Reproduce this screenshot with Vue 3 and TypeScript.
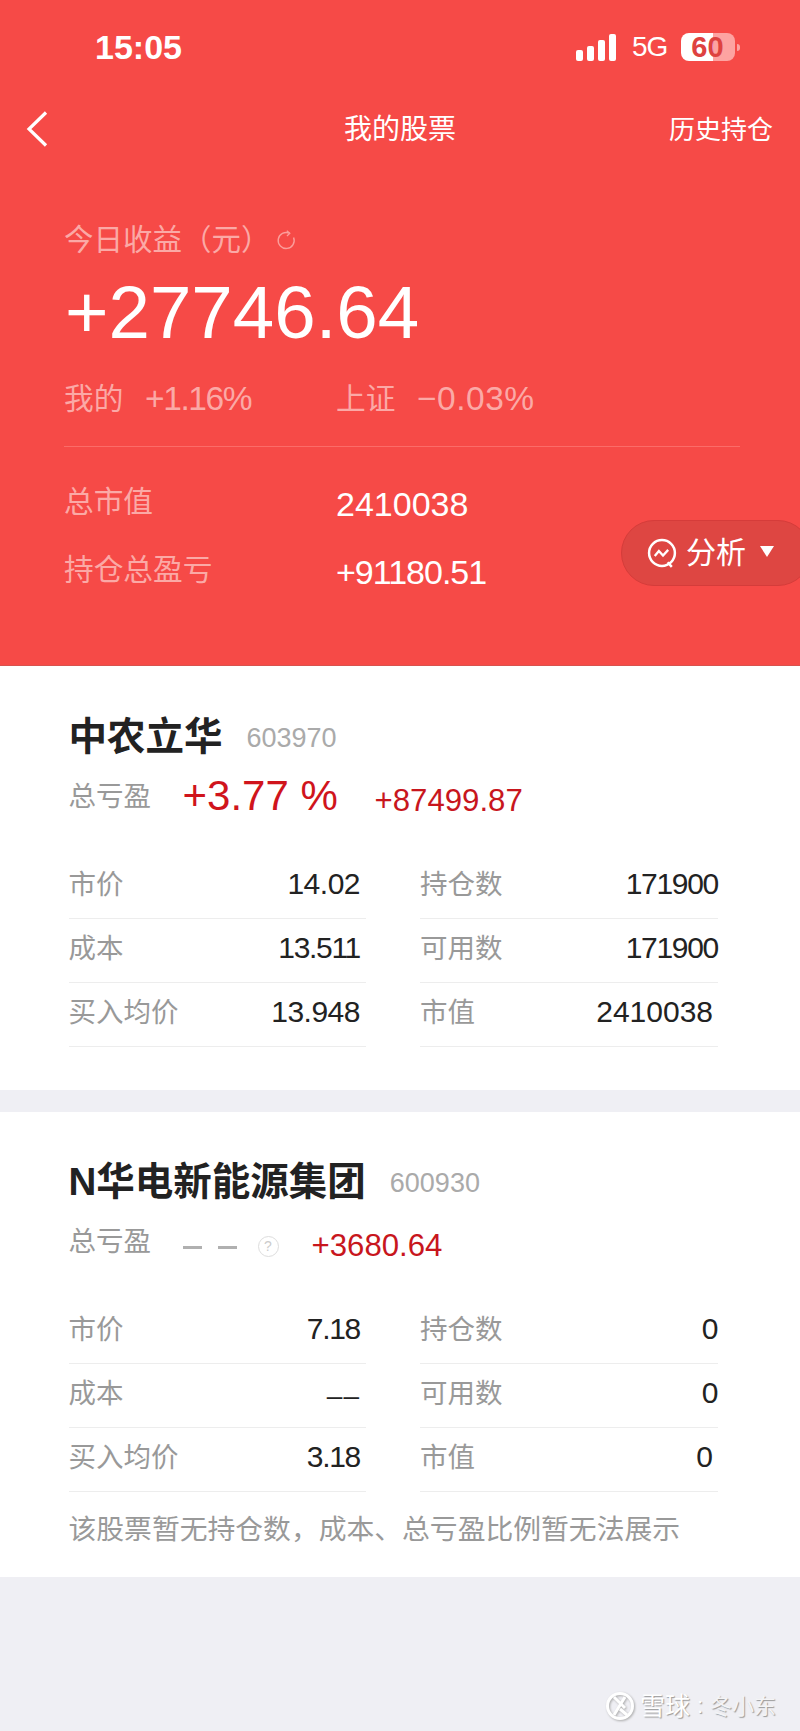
<script setup lang="ts">
interface Row { label: string; value: string; tone?: string }
interface Stock {
  name: string; code: string; pct?: string; profit: string;
  rows: Row[][]; note?: string
}
const stocks: Stock[] = [
  {
    name: '中农立华', code: '603970', pct: '+3.77 %', profit: '+87499.87',
    rows: [
      [{ label: '市价', value: '14.02' }, { label: '持仓数', value: '171900', tone: 'narrow' }],
      [{ label: '成本', value: '13.511', tone: 'narrow' }, { label: '可用数', value: '171900', tone: 'narrow' }],
      [{ label: '买入均价', value: '13.948' }, { label: '市值', value: '2410038', tone: 'inset' }]
    ]
  },
  {
    name: 'N华电新能源集团', code: '600930', profit: '+3680.64',
    rows: [
      [{ label: '市价', value: '7.18', tone: 'narrow' }, { label: '持仓数', value: '0' }],
      [{ label: '成本', value: '––', tone: 'dash' }, { label: '可用数', value: '0' }],
      [{ label: '买入均价', value: '3.18', tone: 'narrow' }, { label: '市值', value: '0', tone: 'inset' }]
    ],
    note: '该股票暂无持仓数，成本、总亏盈比例暂无法展示'
  }
]
</script>

<template>
  <div class="page">
    <header class="hero">
      <div class="status">
        <span class="time">15:05</span>
        <div class="status-right">
          <div class="signal"><i class="b1"></i><i class="b2"></i><i class="b3"></i><i class="b4"></i></div>
          <span class="net">5G</span>
          <div class="battery"><span>60</span></div>
          <i class="nub"></i>
        </div>
      </div>
      <nav class="nav">
        <svg class="back" width="22" height="36" viewBox="0 0 22 36"><path d="M20 1.5 3 18l17 16.5" fill="none" stroke="#fff" stroke-width="3.2"/></svg>
        <span class="title">我的股票</span>
        <span class="history">历史持仓</span>
      </nav>
      <div class="today">
        <span>今日收益（元）</span>
        <svg width="20" height="20" viewBox="0 0 20 20"><path d="M13.5 3.2A8 8 0 1 0 17.6 7.5" fill="none" stroke="#fb9d9a" stroke-width="1.4"/><path d="M10.8 .8 13.8 3.2 11 6" fill="none" stroke="#fb9d9a" stroke-width="1.3"/></svg>
      </div>
      <div class="big">+27746.64</div>
      <div class="compare">
        <div class="cmp-col"><span class="cmp-l">我的</span><span class="tight">+1.16%</span></div>
        <div class="cmp-col"><span class="cmp-l">上证</span><span class="wide">−0.03%</span></div>
      </div>
      <div class="divider"></div>
      <div class="sum-row"><span class="sum-l">总市值</span><span class="sum-v">2410038</span></div>
      <div class="sum-row second"><span class="sum-l">持仓总盈亏</span><span class="sum-v narrow">+91180.51</span></div>
      <div class="pill">
        <svg width="31" height="31" viewBox="0 0 30 30"><circle cx="14.5" cy="14.5" r="12.5" fill="none" stroke="#fff" stroke-width="2.4"/><path d="M20 23.5 24 28" fill="none" stroke="#fff" stroke-width="2.4"/><path d="M7.5 17.5 11.5 12.5 15.5 17 20.5 11.5" fill="none" stroke="#fff" stroke-width="2.2"/></svg>
        <span class="pill-t">分析</span>
        <i class="tri"></i>
      </div>
    </header>

    <section v-for="(s, i) in stocks" :key="s.code" class="card" :class="{ last: i === 1 }">
      <div class="name-row">
        <span class="name">{{ s.name }}</span>
        <span class="code">{{ s.code }}</span>
      </div>
      <div class="gain-row">
        <span class="gain-l">总亏盈</span>
        <template v-if="s.pct">
          <span class="pct">{{ s.pct }}</span>
        </template>
        <template v-else>
          <span class="dashes"><i></i><i></i></span>
          <span class="help">?</span>
        </template>
        <span class="profit">{{ s.profit }}</span>
      </div>
      <div class="table">
        <template v-for="(r, ri) in s.rows" :key="ri">
          <div v-for="c in r" :key="c.label" class="cell">
            <span class="c-l">{{ c.label }}</span>
            <span class="c-v" :class="c.tone">{{ c.value }}</span>
          </div>
        </template>
      </div>
      <p v-if="s.note" class="note">{{ s.note }}</p>
    </section>

    <div class="mark">
      <svg width="30" height="30" viewBox="0 0 30 30"><circle cx="15" cy="15" r="12.5" fill="none" stroke="#fff" stroke-width="3"/><path d="M9 6 20 17M20 6 9 24M15 18l7 6" fill="none" stroke="#fff" stroke-width="3"/></svg>
      <span class="mark-brand">雪球</span><span class="mark-colon">:</span><span class="mark-name">冬小东</span>
    </div>
  </div>
</template>

<style>
html, body { margin: 0; background: #efeff4; }
</style>

<style scoped>
.page {
  position: relative; width: 800px; height: 1731px; overflow: hidden; background: #efeff4;
  font-family: "Liberation Sans", "Noto Sans CJK SC", sans-serif;
}
.hero {
  position: relative; box-sizing: border-box; height: 666px; padding: 0 0 0 64px;
  background: #f64a47; color: #fff; border-bottom: 1px solid #d8524e;
}
.status { display: flex; align-items: center; justify-content: space-between; height: 94px; padding: 0 60px 0 31px; }
.time { font-size: 34px; font-weight: 700; }
.status-right { display: flex; align-items: center; }
.signal { display: flex; align-items: flex-end; gap: 4px; height: 27px; margin-right: 1px; }
.signal i { width: 7px; background: #fff; border-radius: 2px; }
.b1 { height: 11px; } .b2 { height: 15px; } .b3 { height: 21px; } .b4 { height: 27px; }
.net { margin-left: 15px; font-size: 28px; line-height: 30px; width: 36px; letter-spacing: -1px; }
.battery {
  box-sizing: border-box; width: 54px; height: 28px; margin-left: 13px; border-radius: 8px;
  background: linear-gradient(90deg, #fff 59%, #fda3a1 59%);
  display: flex; align-items: center; justify-content: center;
  color: #de4240; font-size: 29px; font-weight: 700; padding-right: 1px;
}
.nub { width: 3px; height: 7px; margin-left: 2px; background: #fda3a1; border-radius: 0 3px 3px 0; }
.nav { display: flex; align-items: center; height: 70px; margin-left: -38px; padding-right: 27px; position: relative; justify-content: flex-end; }
.back { position: absolute; left: 0; top: 17px; }
.title { position: absolute; left: 318px; top: 16px; font-size: 28px; line-height: 40px; white-space: nowrap; }
.history { margin-top: 2px; font-size: 26px; line-height: 40px; }
.today { display: flex; align-items: center; margin-top: 53px; height: 40px; font-size: 29.5px; color: #fba9a6; }
.today svg { margin: 5px 0 0 5px; }
.big { margin: 18px 0 0 1px; height: 76px; font-size: 74.5px; line-height: 76px; }
.compare { display: flex; margin-top: 28px; height: 40px; line-height: 40px; font-size: 33.5px; color: #fba9a6; }
.cmp-col { display: flex; width: 272px; }
.cmp-l { width: 81px; font-size: 29.7px; }
.tight { letter-spacing: -1.4px; }
.wide { letter-spacing: 0.5px; }
.divider { margin: 27px 60px 0 0; height: 1px; background: #fb6c68; }
.sum-row { display: flex; align-items: center; height: 40px; margin-top: 37px; }
.sum-row.second { margin-top: 28px; }
.sum-l { width: 272px; box-sizing: border-box; padding-bottom: 4px; font-size: 29.7px; line-height: 32px; color: #fba9a6; }
.sum-v { font-size: 34px; line-height: 40px; }
.sum-v.narrow { letter-spacing: -1px; }
.pill {
  position: absolute; left: 621px; top: 520px; width: 190px; height: 66px; box-sizing: border-box;
  display: flex; align-items: center; padding-left: 25px;
  background: #de4642; border: 1.5px solid #d53c3a; border-radius: 33px;
}
.pill-t { margin-left: 8px; font-size: 30px; line-height: 40px; }
.tri { width: 0; height: 0; margin: 0 0 3px 14px; border: 7px solid transparent; border-top: 11px solid #fff; border-bottom: 0; }
.card { box-sizing: border-box; height: 424px; margin-bottom: 22px; padding: 0 82px 0 68.5px; background: #fff; }
.card.last { height: 465px; margin-bottom: 0; }
.name-row { display: flex; align-items: center; height: 50px; padding-top: 46px; }
.card.last .name-row { padding-top: 45px; }
.name { font-size: 38.5px; line-height: 50px; font-weight: 700; color: #222; white-space: nowrap; }
.code { margin-left: 24px; font-size: 27px; color: #aaa; padding-top: 2px; }
.gain-row { display: flex; align-items: center; height: 50px; margin-top: 12px; }
.gain-l { width: 114px; padding-bottom: 5px; font-size: 27.5px; line-height: 36px; color: #999; }
.pct { width: 192px; padding-bottom: 6px; font-size: 42px; line-height: 50px; color: #d0141c; }
.profit { font-size: 31.2px; line-height: 44px; color: #c8161d; padding-top: 3px; }
.dashes { display: flex; gap: 16px; width: 75px; padding-top: 6px; }
.dashes i { width: 19px; height: 3px; background: #b0b0b0; }
.help {
  box-sizing: border-box; width: 21px; height: 21px; margin: 4px 33px 0 0; border: 1px solid #ddd; border-radius: 50%;
  color: #ccc; font-size: 14px; line-height: 19px; text-align: center;
}
.table { display: grid; grid-template-columns: 297.5px 298px; column-gap: 54px; margin-top: 31px; }
.cell { display: flex; justify-content: space-between; align-items: center; height: 63px; padding-right: 6px; border-bottom: 1px solid #ededed; }
.cell:nth-child(even) { padding-right: 0; }
.c-l { font-size: 27.5px; line-height: 36px; color: #999; padding-bottom: 4px; }
.c-v { font-size: 30px; line-height: 36px; color: #222; letter-spacing: -0.5px; padding-bottom: 6px; }
.c-v.narrow { letter-spacing: -1.3px; }
.c-v.inset { margin-right: 5px; letter-spacing: 0; }
.c-v.dash { font-size: 28px; letter-spacing: 1px; padding-bottom: 0; }
.note { margin: 18px 0 0; font-size: 27.8px; line-height: 40px; color: #999; white-space: nowrap; }
.mark {
  position: absolute; left: 605px; top: 1689px; display: flex; align-items: center;
  line-height: 30px; color: #fff; text-shadow: 1px 1px 1px #999; white-space: nowrap;
}
.mark svg { filter: drop-shadow(1px 1px 1px #aaa); }
.mark-brand { margin-left: 5px; font-size: 25px; }
.mark-colon { width: 20px; text-align: center; font-size: 22px; }
.mark-name { padding-top: 3px; font-size: 22px; color: #f4f4f6; }
</style>
